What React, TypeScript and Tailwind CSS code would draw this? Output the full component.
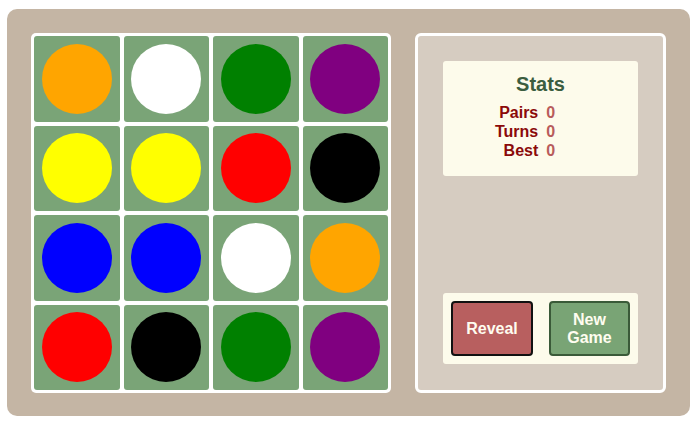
import React from "react";

const colors = [
  "#ffa500", "#ffffff", "#008000", "#800080",
  "#ffff00", "#ffff00", "#ff0000", "#000000",
  "#0000ff", "#0000ff", "#ffffff", "#ffa500",
  "#ff0000", "#000000", "#008000", "#800080",
];

export default function App() {
  return (
    <div className="w-[699px] h-[426px] bg-white pt-[9px] pl-[7px]" style={{ fontFamily: '"Liberation Sans", Arial, sans-serif' }}>
      <div className="w-[683px] h-[407px] bg-[#c4b5a4] rounded-[10px] pt-[24px] pl-[24px] flex gap-[24px]">
        <div className="w-[360px] h-[360px] bg-white rounded-[5px] p-[3px] grid grid-cols-4 grid-rows-4 gap-[4px]">
          {colors.map((c, i) => (
            <div key={i} className="bg-[#7aa477] rounded-[3px] flex items-center justify-center">
              <div className="w-[70px] h-[70px] rounded-full" style={{ backgroundColor: c }} />
            </div>
          ))}
        </div>
        <div className="w-[251px] h-[360px] bg-[#d6ccc1] border-[3px] border-white rounded-[6px] px-[25px] pt-[25px] pb-[26px] flex flex-col justify-between">
          <div className="h-[115px] bg-[#fdfbeb] rounded-[3px] pt-[12px]">
            <div className="text-center text-[20px] leading-[23px] font-bold text-[#3b5d3f]">Stats</div>
            <div className="mt-[7px] ml-[52px] grid grid-cols-[auto_auto] justify-start gap-x-[8px] text-[16px] leading-[19px] font-bold">
              <div className="text-right text-[#8b0a0a]">Pairs</div>
              <div className="text-[#b85c5c]">0</div>
              <div className="text-right text-[#8b0a0a]">Turns</div>
              <div className="text-[#b85c5c]">0</div>
              <div className="text-right text-[#8b0a0a]">Best</div>
              <div className="text-[#b85c5c]">0</div>
            </div>
          </div>
          <div className="h-[71px] bg-[#fdfbeb] rounded-[3px] p-[8px] flex gap-[16px]">
            <button className="w-[82px] shrink-0 bg-[#b85f5f] border-2 border-[#111111] rounded-[4px] text-[#fffdf0] font-bold text-[16px] leading-[18px]">
              Reveal
            </button>
            <button className="w-[81px] shrink-0 bg-[#79a475] border-2 border-[#3a5a38] rounded-[4px] text-[#fffdf0] font-bold text-[16px] leading-[18px] px-[14px]">
              New Game
            </button>
          </div>
        </div>
      </div>
    </div>
  );
}
